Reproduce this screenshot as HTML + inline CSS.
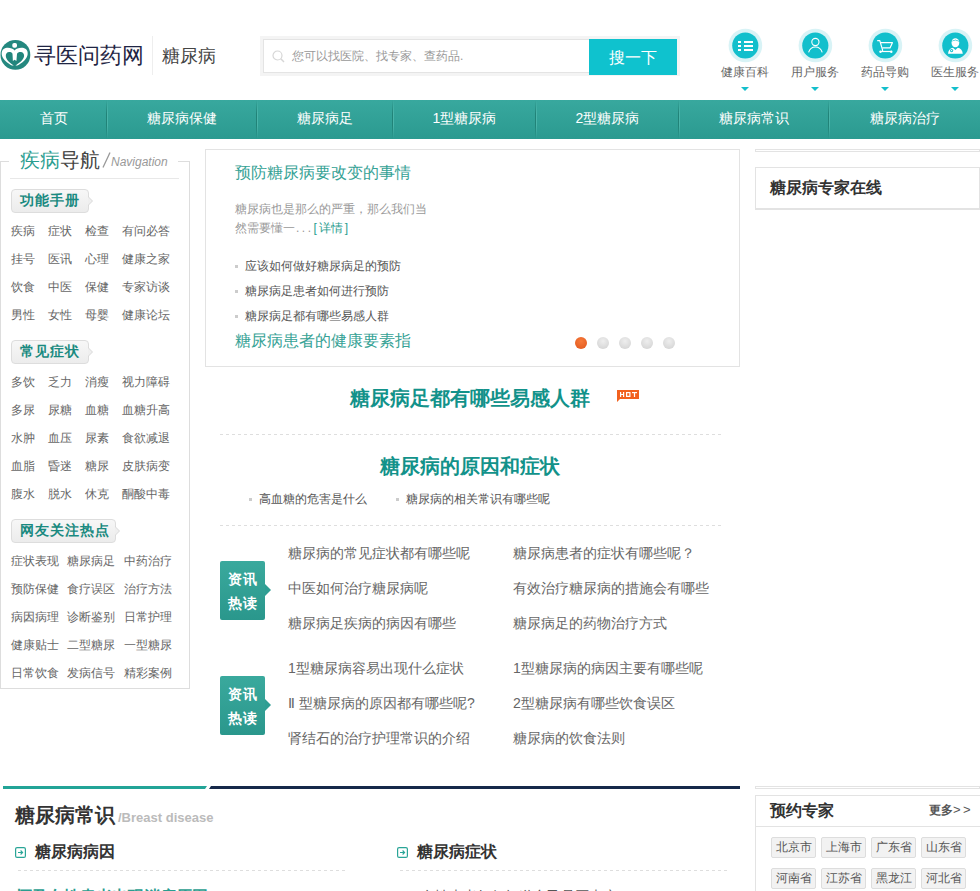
<!DOCTYPE html>
<html><head><meta charset="utf-8">
<style>
*{margin:0;padding:0;box-sizing:border-box}
html,body{width:980px;height:891px;overflow:hidden;background:#fff}
body{position:relative;font-family:"Liberation Sans",sans-serif;font-size:12px;color:#666}
.a{position:absolute;white-space:nowrap}
/* header */
#logo{left:0;top:40px;width:30px;height:30px}
#brand{left:34px;top:43px;font-size:22px;line-height:26px;color:#1f2544;letter-spacing:0px}
#vdiv{left:152px;top:36px;width:1px;height:39px;background:#eee}
#sub{left:162px;top:45px;font-size:18px;line-height:22px;color:#444}
#sbox{left:260px;top:36px;width:420px;height:40px;background:#f4f4f4}
#sin{left:263px;top:39px;width:327px;height:34px;background:#fff;border:1px solid #e4e4e4;border-right:none}
#sph{left:292px;top:50px;font-size:12px;line-height:12px;color:#999}
#sbtn{left:589px;top:39px;width:88px;height:36px;background:#0fc2ce;color:#fff;font-size:16px;line-height:38px;text-align:center}
.ic{width:34px;height:34px;border-radius:50%;background:#d9f3f6}
.ic i{position:absolute;left:4px;top:4px;width:26px;height:26px;border-radius:50%;background:#14bfcc}
.icl{font-size:12px;line-height:12px;color:#666;width:60px;text-align:center}
.tri{width:0;height:0;border-left:4.5px solid transparent;border-right:4.5px solid transparent;border-top:4px solid #14bfcc}
/* nav */
#nav{left:0;top:100px;width:980px;height:39px;background:linear-gradient(#38a89e,#2b9a90)}
.ni{top:0;height:39px;line-height:37px;color:#fff;font-size:14px;text-align:center}
.sep{width:2px;height:39px;background:linear-gradient(rgba(56,168,158,1),rgba(56,168,158,0) 35%,rgba(43,154,144,0) 65%,rgba(43,154,144,1)),linear-gradient(90deg,#218378 50%,#4ab5aa 50%)}
/* left box */
#lbox{left:0;top:161px;width:190px;height:528px;border:1px solid #ddd;border-top:none}
.ltop{top:161px;height:1px;background:#ddd}
#ltitle{left:20px;top:148px;font-size:20px;line-height:24px;color:#444}
#ltitle b{font-weight:normal;color:#2a9d8f}
#lnav{left:102px;top:150px;font-size:21px;line-height:20px;color:#999}
#lnav i{position:absolute;left:9px;top:5px;font-size:12px;line-height:14px;color:#999}
#lsep{left:10px;top:178px;width:169px;height:1px;background:#e8e8e8}
.tag{height:24px;border:1px solid #ddd;border-radius:4px;background:linear-gradient(#f7f7f7,#ececec);color:#1a8a80;font-weight:bold;font-size:14px;line-height:21px;padding-left:8px;letter-spacing:1px}
.tag:before{content:"";position:absolute;right:-5px;top:6px;border-left:5px solid #d8d8d8;border-top:5px solid transparent;border-bottom:5px solid transparent}
.tag:after{content:"";position:absolute;right:-4px;top:7px;border-left:4px solid #efefef;border-top:4px solid transparent;border-bottom:4px solid transparent}
.lk{font-size:12px;line-height:12px;color:#666}

.li{font-size:12px;line-height:12px;color:#555;padding-left:10px}
.li s{position:absolute;left:0;top:5px;width:3px;height:3px;background:#ccc}
.dot{width:12px;height:12px;border-radius:50%;background:radial-gradient(circle at 50% 35%,#eee,#d0d0d0)}
.dot.on{background:radial-gradient(circle at 50% 35%,#f77a3a,#e0561c)}
#hot{width:22px;height:11px;background:#f05a28;color:#fff;font-size:8px;line-height:11px;font-weight:bold;text-align:center}
.dash{height:1px;background:repeating-linear-gradient(90deg,#dedede 0 3px,transparent 3px 6px)}
.badge{width:45px;height:59px;border-radius:2px;background:linear-gradient(#3aa99d,#2a978c);color:#fff;font-weight:bold;font-size:14px;line-height:24px;padding-top:6px;padding-left:1px;text-align:center;letter-spacing:1px}
.badge:after{content:"";position:absolute;left:45px;top:23px;border-left:6px solid #2f9e93;border-top:6px solid transparent;border-bottom:6px solid transparent}
.nw{font-size:14px;line-height:14px;color:#666}
.dbl{width:225px;height:3px;border:1px solid #e3e3e3}
.ct{width:45px;height:21px;border:1px solid #ddd;border-radius:2px;background:#f2f2f2;font-size:12px;line-height:19px;text-align:center;color:#555}
</style></head><body>
<!-- header -->
<svg class="a" id="logo" style="left:0;top:40px;width:31px;height:31px" viewBox="0 0 31 31"><circle cx="15.4" cy="14.9" r="14.9" fill="#24887f"/><rect x="12.3" y="3" width="4.7" height="4.7" rx="1.8" fill="#fff"/><path d="M14.6 10.4 C12.5 8 7 6.6 3.6 9 C0.6 11.5 1.2 17 5 20.5 C7.5 23 10 24.6 12 25.6 L17.3 25.6 C19.3 24.6 21.9 23 24.4 20.5 C28.2 17 28.8 11.5 25.8 9 C22.4 6.6 16.7 8 14.6 10.4 Z" fill="#fff"/><path d="M12.5 14 C12.3 12.6 10.9 12 9.2 12 C6.9 12 5.7 13.8 5.8 16 C6 19.6 9.3 22.6 13 25 L14.6 27 L16.2 25 C19.9 22.6 23.8 19.6 24.1 16 C24.2 13.8 23 12 20.6 12 C18.9 12 17.4 12.6 17 14 L16.4 21 L14.6 19.8 L12.9 21 Z" fill="#22857c"/></svg>
<div class="a" id="brand">寻医问药网</div>
<div class="a" id="vdiv"></div>
<div class="a" id="sub">糖尿病</div>
<div class="a" id="sbox"></div>
<div class="a" id="sin"></div>
<svg class="a" style="left:272px;top:50px" width="13" height="13" viewBox="0 0 13 13"><circle cx="5.5" cy="5.5" r="4.5" fill="none" stroke="#d6d6d6" stroke-width="1.2"/><path d="M8.8 8.8 L12 12" stroke="#d6d6d6" stroke-width="1.5"/></svg>
<div class="a" id="sph">您可以找医院、找专家、查药品.</div>
<div class="a" id="sbtn">搜一下</div>

<!-- icons -->
<svg class="a" style="left:725px;top:25px" width="40" height="40"><circle cx="20.4" cy="20.5" r="16.8" fill="#d8f3f6"/><circle cx="20.3" cy="20.5" r="13.1" fill="#12bfcc"/><g fill="#fff"><rect x="13" y="16" width="3" height="2"/><rect x="19" y="16" width="9" height="2"/><rect x="13" y="20" width="3" height="2"/><rect x="19" y="20" width="9" height="2"/><rect x="13" y="24" width="3" height="2"/><rect x="19" y="24" width="9" height="2"/></g></svg>
<svg class="a" style="left:795px;top:25px" width="40" height="40"><circle cx="20.4" cy="20.5" r="16.8" fill="#d8f3f6"/><circle cx="20.3" cy="20.5" r="13.1" fill="#12bfcc"/><g fill="none" stroke="#fff" stroke-width="1.1"><circle cx="20.4" cy="17" r="3.6"/><path d="M13.6 27.4 C14.8 23.5 17.2 22 20.4 22 C23.6 22 26 23.5 27.2 27.4"/></g></svg>
<svg class="a" style="left:865px;top:25px" width="40" height="40"><circle cx="20.4" cy="20.5" r="16.8" fill="#d8f3f6"/><circle cx="20.3" cy="20.5" r="13.1" fill="#12bfcc"/><g fill="none" stroke="#fff" stroke-width="1.2" stroke-linejoin="round"><path d="M12.2 15.6 H14.8 L17.6 25.2 L17.4 26.3"/><path d="M15.6 17.7 H27.4 L25 22.9 H17.3"/><path d="M14.8 26.5 H26.8"/></g><circle cx="15.5" cy="26.7" r="1.2" fill="#fff"/><circle cx="26.3" cy="26.7" r="1.2" fill="#fff"/></svg>
<svg class="a" style="left:935px;top:25px" width="40" height="40"><circle cx="20.4" cy="20.5" r="16.8" fill="#d8f3f6"/><circle cx="20.3" cy="20.5" r="13.1" fill="#12bfcc"/><ellipse cx="20.4" cy="17.7" rx="3.9" ry="4.5" fill="#fff"/><path d="M17 16.5 C18 14.8 19.5 16 20.4 15 C21.3 16 22.8 15 23.8 16.5" stroke="#12bfcc" stroke-width="0.7" fill="none"/><path d="M13 28.7 C13.3 25 15.5 23 18 22.8 L20.4 25 L22.8 22.8 C25.3 23 27.5 25 27.8 28.7 Z" fill="#fff"/><circle cx="16.6" cy="25.6" r="1.6" fill="#12bfcc"/><circle cx="16.6" cy="25.6" r="0.7" fill="#fff"/></svg>
<div class="a icl" style="left:715px;top:66px">健康百科</div>
<div class="a icl" style="left:785px;top:66px">用户服务</div>
<div class="a icl" style="left:855px;top:66px">药品导购</div>
<div class="a icl" style="left:925px;top:66px">医生服务</div>
<div class="a tri" style="left:741px;top:87px"></div>
<div class="a tri" style="left:811px;top:87px"></div>
<div class="a tri" style="left:881px;top:87px"></div>
<div class="a tri" style="left:951px;top:87px"></div>
<!-- nav -->
<div class="a" id="nav"></div>
<div class="a ni" style="left:0;top:100px;width:107px">首页</div>
<div class="a ni" style="left:107px;top:100px;width:150px">糖尿病保健</div>
<div class="a ni" style="left:257px;top:100px;width:136px">糖尿病足</div>
<div class="a ni" style="left:393px;top:100px;width:143px">1型糖尿病</div>
<div class="a ni" style="left:536px;top:100px;width:143px">2型糖尿病</div>
<div class="a ni" style="left:679px;top:100px;width:150px">糖尿病常识</div>
<div class="a ni" style="left:829px;top:100px;width:151px">糖尿病治疗</div>
<div class="a sep" style="left:106px;top:100px"></div>
<div class="a sep" style="left:256px;top:100px"></div>
<div class="a sep" style="left:392px;top:100px"></div>
<div class="a sep" style="left:535px;top:100px"></div>
<div class="a sep" style="left:678px;top:100px"></div>
<div class="a sep" style="left:828px;top:100px"></div>
<!-- left box -->
<div class="a" id="lbox"></div>
<div class="a ltop" style="left:0;width:9px"></div>
<div class="a ltop" style="left:178px;width:12px"></div>
<div class="a" id="ltitle"><b>疾病</b>导航</div>
<svg class="a" style="left:100px;top:150px" width="12" height="20"><path d="M10 2.5 L3 17.5" stroke="#999" stroke-width="1.3"/></svg><div class="a" id="lnav"><i>Navigation</i></div>
<div class="a" id="lsep"></div>
<div class="a tag" style="left:11px;top:189px;width:78px">功能手册</div>
<div class="a lk" style="left:11px;top:225px">疾病</div>
<div class="a lk" style="left:48px;top:225px">症状</div>
<div class="a lk" style="left:85px;top:225px">检查</div>
<div class="a lk" style="left:122px;top:225px">有问必答</div>
<div class="a lk" style="left:11px;top:253px">挂号</div>
<div class="a lk" style="left:48px;top:253px">医讯</div>
<div class="a lk" style="left:85px;top:253px">心理</div>
<div class="a lk" style="left:122px;top:253px">健康之家</div>
<div class="a lk" style="left:11px;top:281px">饮食</div>
<div class="a lk" style="left:48px;top:281px">中医</div>
<div class="a lk" style="left:85px;top:281px">保健</div>
<div class="a lk" style="left:122px;top:281px">专家访谈</div>
<div class="a lk" style="left:11px;top:309px">男性</div>
<div class="a lk" style="left:48px;top:309px">女性</div>
<div class="a lk" style="left:85px;top:309px">母婴</div>
<div class="a lk" style="left:122px;top:309px">健康论坛</div>
<div class="a tag" style="left:11px;top:340px;width:78px">常见症状</div>
<div class="a lk" style="left:11px;top:376px">多饮</div>
<div class="a lk" style="left:48px;top:376px">乏力</div>
<div class="a lk" style="left:85px;top:376px">消瘦</div>
<div class="a lk" style="left:122px;top:376px">视力障碍</div>
<div class="a lk" style="left:11px;top:404px">多尿</div>
<div class="a lk" style="left:48px;top:404px">尿糖</div>
<div class="a lk" style="left:85px;top:404px">血糖</div>
<div class="a lk" style="left:122px;top:404px">血糖升高</div>
<div class="a lk" style="left:11px;top:432px">水肿</div>
<div class="a lk" style="left:48px;top:432px">血压</div>
<div class="a lk" style="left:85px;top:432px">尿素</div>
<div class="a lk" style="left:122px;top:432px">食欲减退</div>
<div class="a lk" style="left:11px;top:460px">血脂</div>
<div class="a lk" style="left:48px;top:460px">昏迷</div>
<div class="a lk" style="left:85px;top:460px">糖尿</div>
<div class="a lk" style="left:122px;top:460px">皮肤病变</div>
<div class="a lk" style="left:11px;top:488px">腹水</div>
<div class="a lk" style="left:48px;top:488px">脱水</div>
<div class="a lk" style="left:85px;top:488px">休克</div>
<div class="a lk" style="left:122px;top:488px">酮酸中毒</div>
<div class="a tag" style="left:11px;top:519px;width:105px">网友关注热点</div>
<div class="a lk" style="left:11px;top:555px">症状表现</div>
<div class="a lk" style="left:67px;top:555px">糖尿病足</div>
<div class="a lk" style="left:124px;top:555px">中药治疗</div>
<div class="a lk" style="left:11px;top:583px">预防保健</div>
<div class="a lk" style="left:67px;top:583px">食疗误区</div>
<div class="a lk" style="left:124px;top:583px">治疗方法</div>
<div class="a lk" style="left:11px;top:611px">病因病理</div>
<div class="a lk" style="left:67px;top:611px">诊断鉴别</div>
<div class="a lk" style="left:124px;top:611px">日常护理</div>
<div class="a lk" style="left:11px;top:639px">健康贴士</div>
<div class="a lk" style="left:67px;top:639px">二型糖尿</div>
<div class="a lk" style="left:124px;top:639px">一型糖尿</div>
<div class="a lk" style="left:11px;top:667px">日常饮食</div>
<div class="a lk" style="left:67px;top:667px">发病信号</div>
<div class="a lk" style="left:124px;top:667px">精彩案例</div>
<!-- center slider -->
<div class="a" style="left:205px;top:149px;width:535px;height:218px;border:1px solid #e3e3e3"></div>
<div class="a" style="left:235px;top:164px;font-size:16px;line-height:18px;color:#36a295">预防糖尿病要改变的事情</div>
<div class="a" style="left:235px;top:200px;width:200px;white-space:normal;font-size:12px;line-height:19px;color:#999">糖尿病也是那么的严重，那么我们当然需要懂一<span style="letter-spacing:2.5px;margin-left:1px">...</span><span style="color:#2a9d8f;margin-left:0px"><span style="margin-right:2px">[</span>详情<span style="margin-left:2px">]</span></span></div>
<div class="a li" style="left:235px;top:260px"><s></s>应该如何做好糖尿病足的预防</div>
<div class="a li" style="left:235px;top:285px"><s></s>糖尿病足患者如何进行预防</div>
<div class="a li" style="left:235px;top:310px"><s></s>糖尿病足都有哪些易感人群</div>
<div class="a" style="left:235px;top:332px;font-size:16px;line-height:18px;color:#36a295">糖尿病患者的健康要素指</div>
<div class="a dot on" style="left:575px;top:337px"></div>
<div class="a dot" style="left:597px;top:337px"></div>
<div class="a dot" style="left:619px;top:337px"></div>
<div class="a dot" style="left:641px;top:337px"></div>
<div class="a dot" style="left:663px;top:337px"></div>
<!-- center headlines -->
<div class="a" style="left:350px;top:386px;font-size:20px;line-height:24px;font-weight:bold;color:#12928a">糖尿病足都有哪些易感人群</div>
<svg class="a" style="left:617px;top:390px" width="22" height="12" viewBox="0 0 22 12"><path d="M0 0 H22 V9 H3 L0 12 Z" fill="#f2611f"/><g fill="#fff"><rect x="3" y="2" width="1.2" height="5"/><rect x="6" y="2" width="1.2" height="5"/><rect x="3" y="4" width="4" height="1"/><rect x="9" y="2" width="4.5" height="5"/><rect x="15" y="2" width="5" height="1.2"/><rect x="16.9" y="2" width="1.2" height="5"/></g><rect x="10.2" y="3.2" width="2.1" height="2.6" fill="#f2611f"/></svg>
<div class="a dash" style="left:220px;top:434px;width:501px"></div>
<div class="a" style="left:380px;top:454px;font-size:20px;line-height:24px;font-weight:bold;color:#12928a">糖尿病的原因和症状</div>
<div class="a li" style="left:249px;top:493px"><s></s>高血糖的危害是什么</div>
<div class="a li" style="left:396px;top:493px"><s></s>糖尿病的相关常识有哪些呢</div>
<div class="a dash" style="left:220px;top:525px;width:501px"></div>
<!-- news -->
<div class="a badge" style="left:220px;top:561px">资讯<br>热读</div>
<div class="a badge" style="left:220px;top:676px">资讯<br>热读</div>
<div class="a nw" style="left:288px;top:546px">糖尿病的常见症状都有哪些呢</div>
<div class="a nw" style="left:288px;top:581px">中医如何治疗糖尿病呢</div>
<div class="a nw" style="left:288px;top:616px">糖尿病足疾病的病因有哪些</div>
<div class="a nw" style="left:513px;top:546px">糖尿病患者的症状有哪些呢？</div>
<div class="a nw" style="left:513px;top:581px">有效治疗糖尿病的措施会有哪些</div>
<div class="a nw" style="left:513px;top:616px">糖尿病足的药物治疗方式</div>
<div class="a nw" style="left:288px;top:661px">1型糖尿病容易出现什么症状</div>
<div class="a nw" style="left:288px;top:696px">Ⅱ 型糖尿病的原因都有哪些呢?</div>
<div class="a nw" style="left:288px;top:731px">肾结石的治疗护理常识的介绍</div>
<div class="a nw" style="left:513px;top:661px">1型糖尿病的病因主要有哪些呢</div>
<div class="a nw" style="left:513px;top:696px">2型糖尿病有哪些饮食误区</div>
<div class="a nw" style="left:513px;top:731px">糖尿病的饮食法则</div>
<!-- right column -->
<div class="a dbl" style="left:755px;top:149px"></div>
<div class="a" style="left:755px;top:167px;width:225px;height:43px;border:1px solid #e3e3e3;border-bottom-width:2px"></div>
<div class="a" style="left:770px;top:179px;font-size:16px;line-height:18px;font-weight:bold;color:#333">糖尿病专家在线</div>
<div class="a dbl" style="left:755px;top:786px"></div>
<div class="a" style="left:755px;top:795px;width:240px;height:120px;border:1px solid #e3e3e3"></div>
<div class="a" style="left:756px;top:826px;width:224px;height:1px;background:#e3e3e3"></div>
<div class="a" style="left:770px;top:802px;font-size:16px;line-height:18px;font-weight:bold;color:#333">预约专家</div>
<div class="a" style="left:929px;top:804px;font-size:12px;line-height:12px;font-weight:bold;color:#555">更多<span style="font-weight:normal;letter-spacing:2.5px;font-size:13px">&gt;&gt;</span></div>
<div class="a ct" style="left:771px;top:837px">北京市</div>
<div class="a ct" style="left:821px;top:837px">上海市</div>
<div class="a ct" style="left:871px;top:837px">广东省</div>
<div class="a ct" style="left:921px;top:837px">山东省</div>
<div class="a ct" style="left:771px;top:868px">河南省</div>
<div class="a ct" style="left:821px;top:868px">江苏省</div>
<div class="a ct" style="left:871px;top:868px">黑龙江</div>
<div class="a ct" style="left:921px;top:868px">河北省</div>
<!-- bottom section -->
<svg class="a" style="left:3px;top:786px" width="737" height="3"><polygon points="0,0 204,0 202,3 0,3" fill="#22a497"/><polygon points="208,0 737,0 737,3 206,3" fill="#16294a"/></svg>
<div class="a" style="left:15px;top:803px;font-size:20px;line-height:24px;font-weight:bold;color:#333">糖尿病常识</div>
<div class="a" style="left:118px;top:811px;font-size:13px;line-height:14px;font-weight:bold;color:#bbb">/Breast disease</div>
<svg class="a" style="left:15px;top:847px" width="11" height="11" viewBox="0 0 11 11"><rect x="0.6" y="0.6" width="9.8" height="9.8" rx="1.5" fill="none" stroke="#2aa597" stroke-width="1.2"/><path d="M3 5.5 H7.6 M5.6 3.5 L7.6 5.5 L5.6 7.5" stroke="#2aa597" fill="none" stroke-width="1.1"/></svg>
<div class="a" style="left:35px;top:843px;font-size:16px;line-height:18px;font-weight:bold;color:#333">糖尿病病因</div>
<div class="a dash" style="left:18px;top:870px;width:327px"></div>
<div class="a" style="left:16px;top:888px;font-size:16px;line-height:18px;font-weight:bold;color:#2a9d8f">怀孕女性患者出现消瘦原因</div>
<svg class="a" style="left:397px;top:847px" width="11" height="11" viewBox="0 0 11 11"><rect x="0.6" y="0.6" width="9.8" height="9.8" rx="1.5" fill="none" stroke="#2aa597" stroke-width="1.2"/><path d="M3 5.5 H7.6 M5.6 3.5 L7.6 5.5 L5.6 7.5" stroke="#2aa597" fill="none" stroke-width="1.1"/></svg>
<div class="a" style="left:417px;top:843px;font-size:16px;line-height:18px;font-weight:bold;color:#333">糖尿病症状</div>
<div class="a dash" style="left:400px;top:870px;width:327px"></div>
<div class="a" style="left:421px;top:888px;font-size:14px;line-height:16px;color:#555">女性患者如何知道自己是否患病</div>
</body></html>
